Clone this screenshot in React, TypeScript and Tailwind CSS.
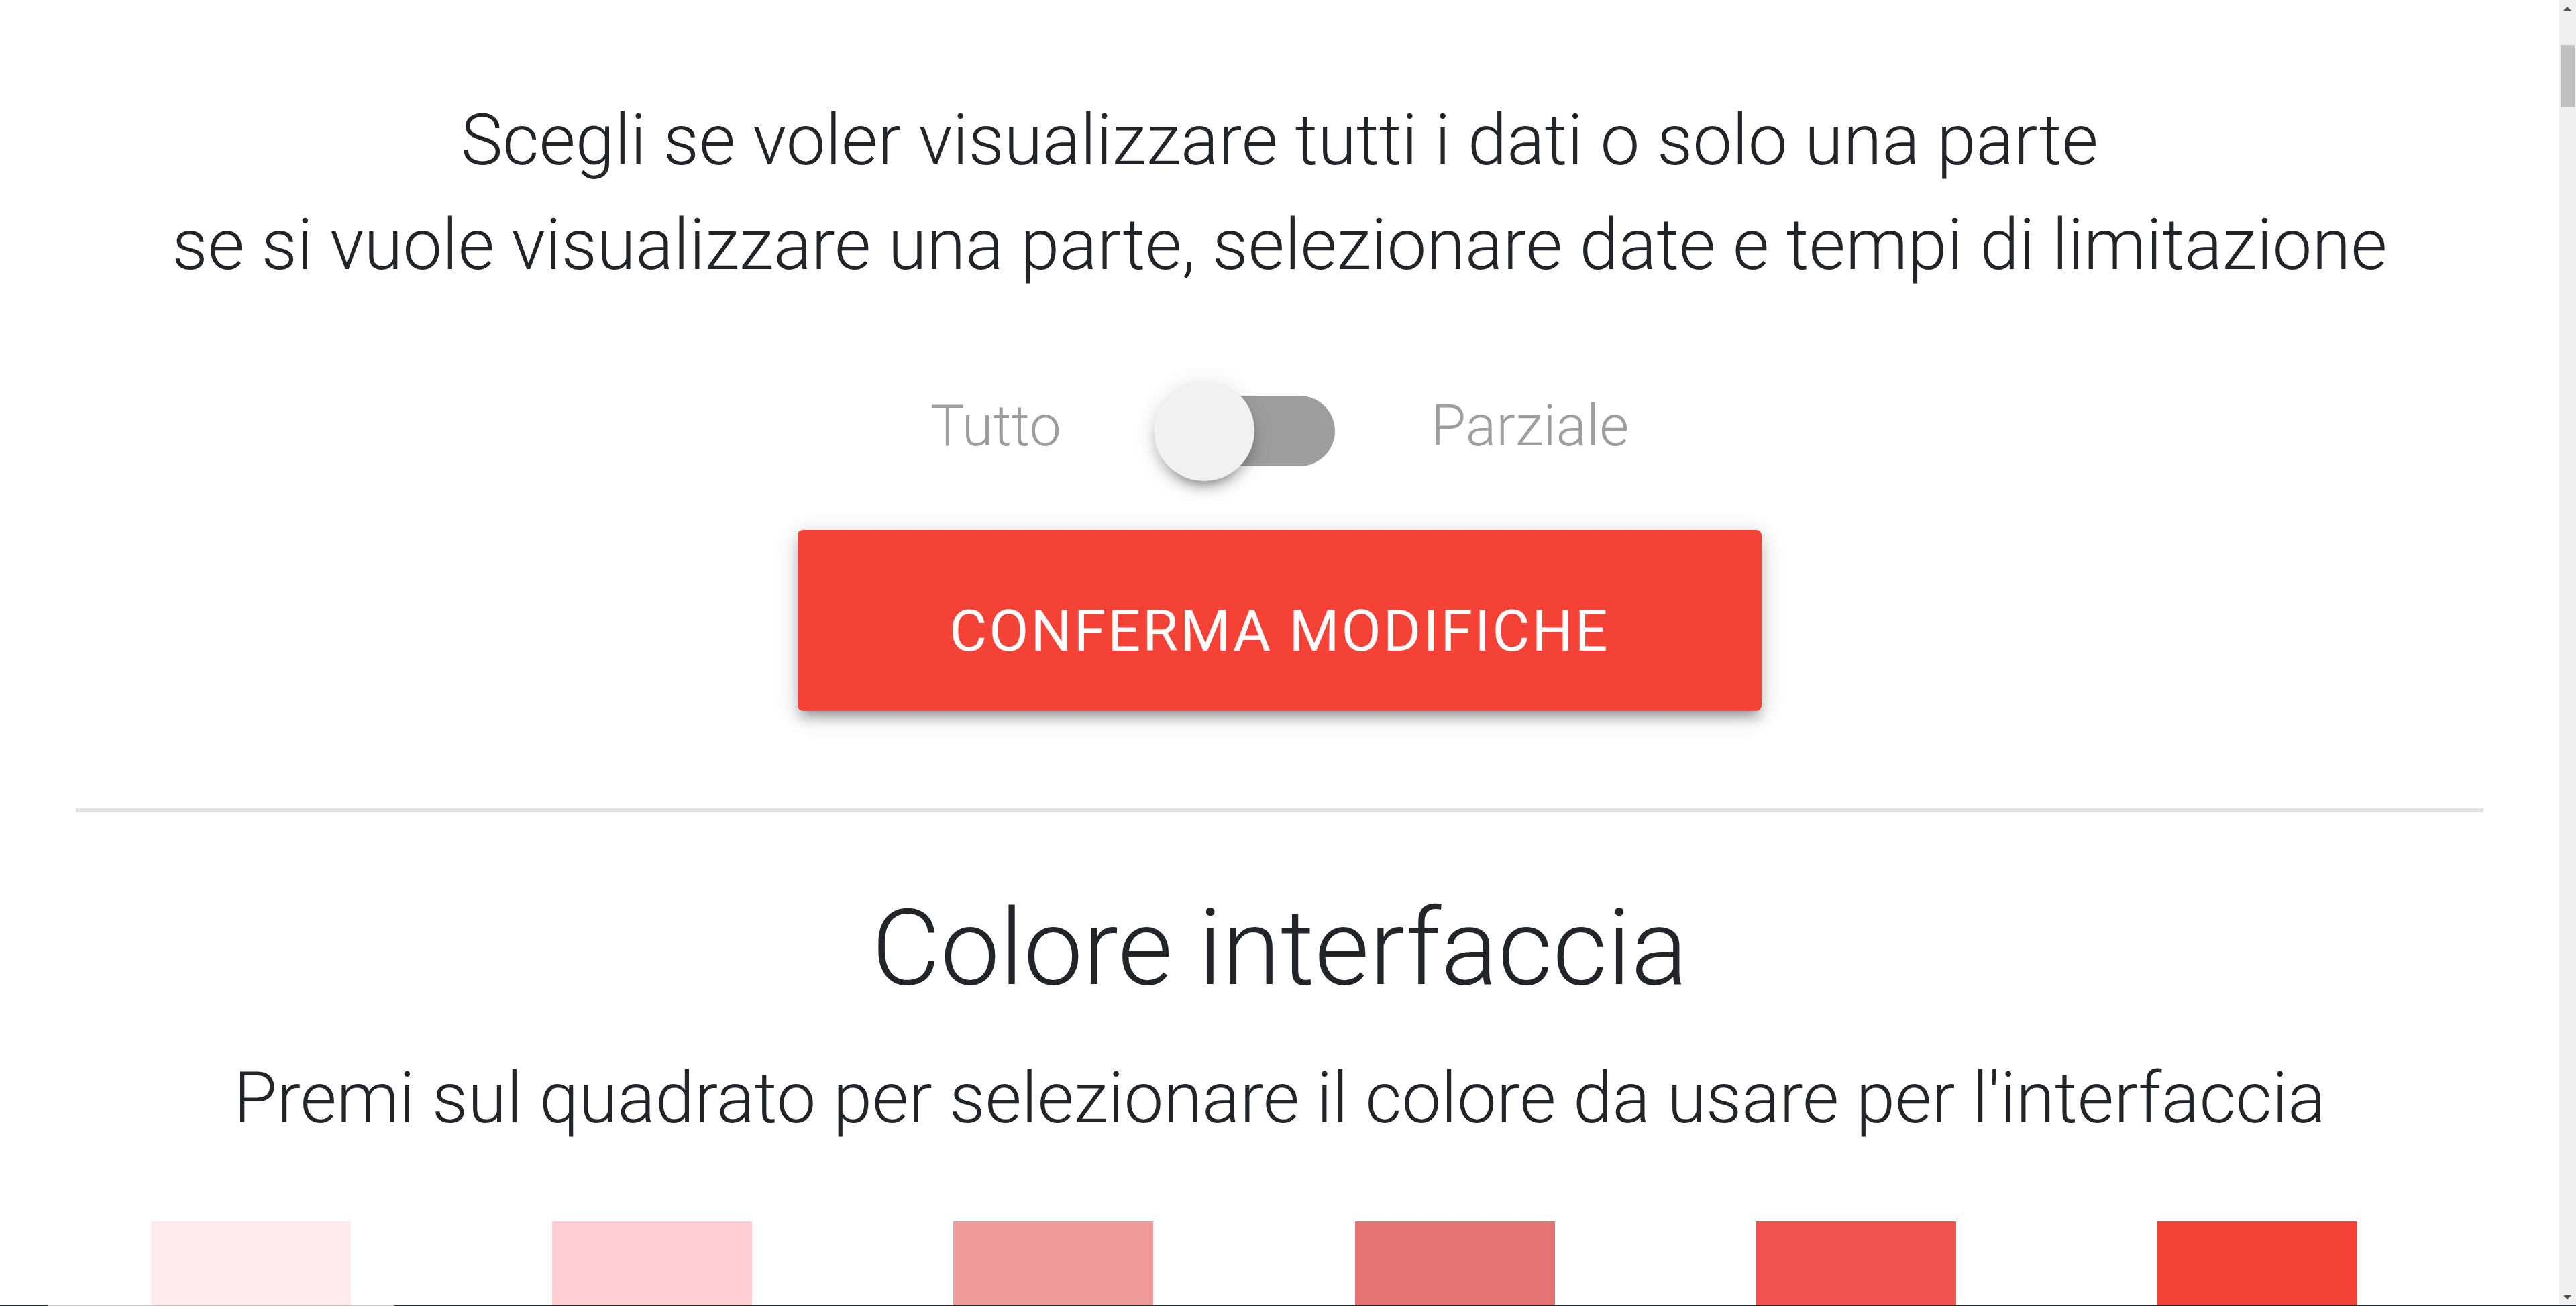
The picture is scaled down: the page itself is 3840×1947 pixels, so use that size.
import React from "react";

const swatches = ["#ffebee", "#ffcdd2", "#ef9a9a", "#e57373", "#ef5350", "#f44336"];

export default function App() {
  return (
    <div
      className="w-[3840px] h-[1947px] overflow-hidden flex flex-col bg-white text-[#212529]"
      style={{ fontFamily: "Roboto, 'Liberation Sans', sans-serif" }}
    >
      <div className="flex flex-row h-[1946px] shrink-0 overflow-hidden">
        <main className="flex-1 flex flex-col items-center px-[113px] overflow-hidden">
          <p className="shrink-0 mt-[132px] text-center text-[105px] leading-[156px] font-light whitespace-nowrap">
            Scegli se voler visualizzare tutti i dati o solo una parte
            <br />
            se si vuole visualizzare una parte, selezionare date e tempi di limitazione
          </p>

          <div className="shrink-0 mt-[123px] h-[150px] flex flex-row items-center">
            <span className="text-[85px] leading-none font-light text-[#9e9e9e] mb-[14px]">Tutto</span>
            <div className="relative ml-[138px] mr-[143px] w-[270px] h-[150px] flex items-center">
              <div className="w-[270px] h-[105px] rounded-full bg-[#9e9e9e]" />
              <div className="absolute left-0 top-0 w-[150px] h-[150px] rounded-full bg-[#f1f1f1] shadow-[0_14px_14px_rgba(0,0,0,0.14),0_20px_8px_-14px_rgba(0,0,0,0.2),0_7px_35px_rgba(0,0,0,0.12)]" />
            </div>
            <span className="text-[85px] leading-none font-light text-[#9e9e9e] mb-[14px]">Parziale</span>
          </div>

          <button className="shrink-0 mt-[73px] w-[1437px] h-[270px] pt-[30px] rounded-[8px] bg-[#f44336] text-white text-[86px] font-normal tracking-[3px] uppercase flex items-center justify-center shadow-[0_14px_14px_rgba(0,0,0,0.14),0_20px_8px_-14px_rgba(0,0,0,0.12),0_7px_35px_rgba(0,0,0,0.2)]">
            CONFERMA MODIFICHE
          </button>

          <div className="shrink-0 mt-[145px] w-full h-[6px] bg-[#e3e3e3]" />

          <h2 className="shrink-0 mt-[105px] text-center text-[158px] leading-[194px] font-light whitespace-nowrap">
            Colore interfaccia
          </h2>

          <p className="shrink-0 mt-[50px] text-center text-[105px] leading-[156px] font-light whitespace-nowrap">
            Premi sul quadrato per selezionare il colore da usare per l'interfaccia
          </p>

          <div className="shrink-0 mt-[105px] w-full grid grid-cols-6">
            {swatches.map((c) => (
              <div key={c} className="pl-[112px]">
                <div className="w-[298px] h-[300px]" style={{ backgroundColor: c }} />
              </div>
            ))}
          </div>
        </main>

        <div className="w-[25px] h-full bg-[#f0f0f0] relative shrink-0">
          <div className="absolute left-[6px] top-[10px] w-0 h-0 border-l-[6px] border-r-[6px] border-b-[6px] border-l-transparent border-r-transparent border-b-[#505050]" />
          <div className="absolute left-[2px] top-[67px] w-[21px] h-[93px] bg-[#c0c0c0]" />
          <div className="absolute left-[6px] top-[1931px] w-0 h-0 border-l-[6px] border-r-[6px] border-t-[6px] border-l-transparent border-r-transparent border-t-[#505050]" />
        </div>
      </div>
      <div className="shrink-0 h-[1px] w-full bg-[#1e2a33] flex flex-row">
        <div className="ml-[71px] w-[517px] h-[1px] bg-[#c0c0c0]" />
      </div>
    </div>
  );
}
